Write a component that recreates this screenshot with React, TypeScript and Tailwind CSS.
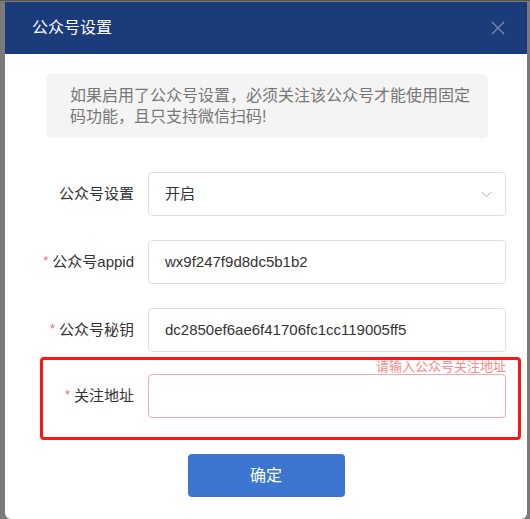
import { ChevronDown } from 'lucide-react';

const font = { fontFamily: '"Liberation Sans", "Noto Sans CJK SC", sans-serif' };

function Field({ label, value, required, select }: { label: string; value: string; required?: boolean; select?: boolean }) {
    return (
        <div className="flex items-center mr-[21px] mb-[24px]">
            <label className="w-[129px] shrink-0 text-right text-[15px] text-[#333]">
                {required && <span className="text-[#f56c6c] text-[13px] mr-[4px] relative -top-[2px]">*</span>}
                {label}
            </label>
            <div className="ml-[14px] flex-1 h-[44px] border border-[#dcdfe6] rounded-[4px] flex items-center justify-between pl-[16px] pr-[10px]">
                <span className="text-[15px] text-[#333]">{value}</span>
                {select && <ChevronDown className="w-[17px] h-[17px] text-[#a8b0c0]" strokeWidth={1.4} />}
            </div>
        </div>
    );
}

export default function App() {
    return (
        <div className="w-[530px] h-[519px] bg-[#7b7b7b] pt-[1px] pl-[5px] pr-[3px] overflow-hidden border-t border-[#555]" style={font}>
            <div className="bg-white h-[517px] rounded-b-[6px] flex flex-col">
                {/* header */}
                <div className="h-[52px] bg-[#1b3b7a] flex items-center justify-between pl-[27px] pr-[22px] shrink-0">
                    <span className="text-white text-[16px]">公众号设置</span>
                    <svg width="14" height="14" viewBox="0 0 14 14" className="text-[#7d8aa8]">
                        <path d="M1 1L13 13M13 1L1 13" stroke="currentColor" strokeWidth="1.3" />
                    </svg>
                </div>

                {/* tip */}
                <div className="mt-[20px] ml-[41px] mr-[39px] bg-[#f4f4f4] rounded-[5px] py-[11px] pl-[24px] pr-[12px] text-[16px] leading-[21px] text-[#777]">
                    如果启用了公众号设置，必须关注该公众号才能使用固定码功能，且只支持微信扫码!
                </div>

                <div className="mt-[34px]">
                    <Field label="公众号设置" value="开启" select />
                    <Field label="公众号appid" value="wx9f247f9d8dc5b1b2" required />
                    <Field label="公众号秘钥" value="dc2850ef6ae6f41706fc1cc119005ff5" required />
                </div>

                {/* highlighted error row */}
                <div className="-mt-[19px] ml-[35px] mr-[6px] border-[3px] border-[#ff1414] rounded-[4px] pr-[12px] pb-[19px]">
                    <div className="text-right text-[13px] leading-[14px] h-[14px] text-[#f78989]">请输入公众号关注地址</div>
                    <div className="flex items-center">
                        <label className="w-[91px] shrink-0 text-right text-[15px] text-[#333]">
                            <span className="text-[#f56c6c] text-[13px] mr-[4px] relative -top-[2px]">*</span>
                            关注地址
                        </label>
                        <div className="ml-[14px] flex-1 h-[44px] border border-[#f8a9a9] rounded-[4px]" />
                    </div>
                </div>

                <div className="flex justify-center mt-[14px]">
                    <button className="w-[157px] h-[43px] bg-[#3c76d0] rounded-[4px] text-white text-[16px]">确定</button>
                </div>
            </div>
        </div>
    );
}
